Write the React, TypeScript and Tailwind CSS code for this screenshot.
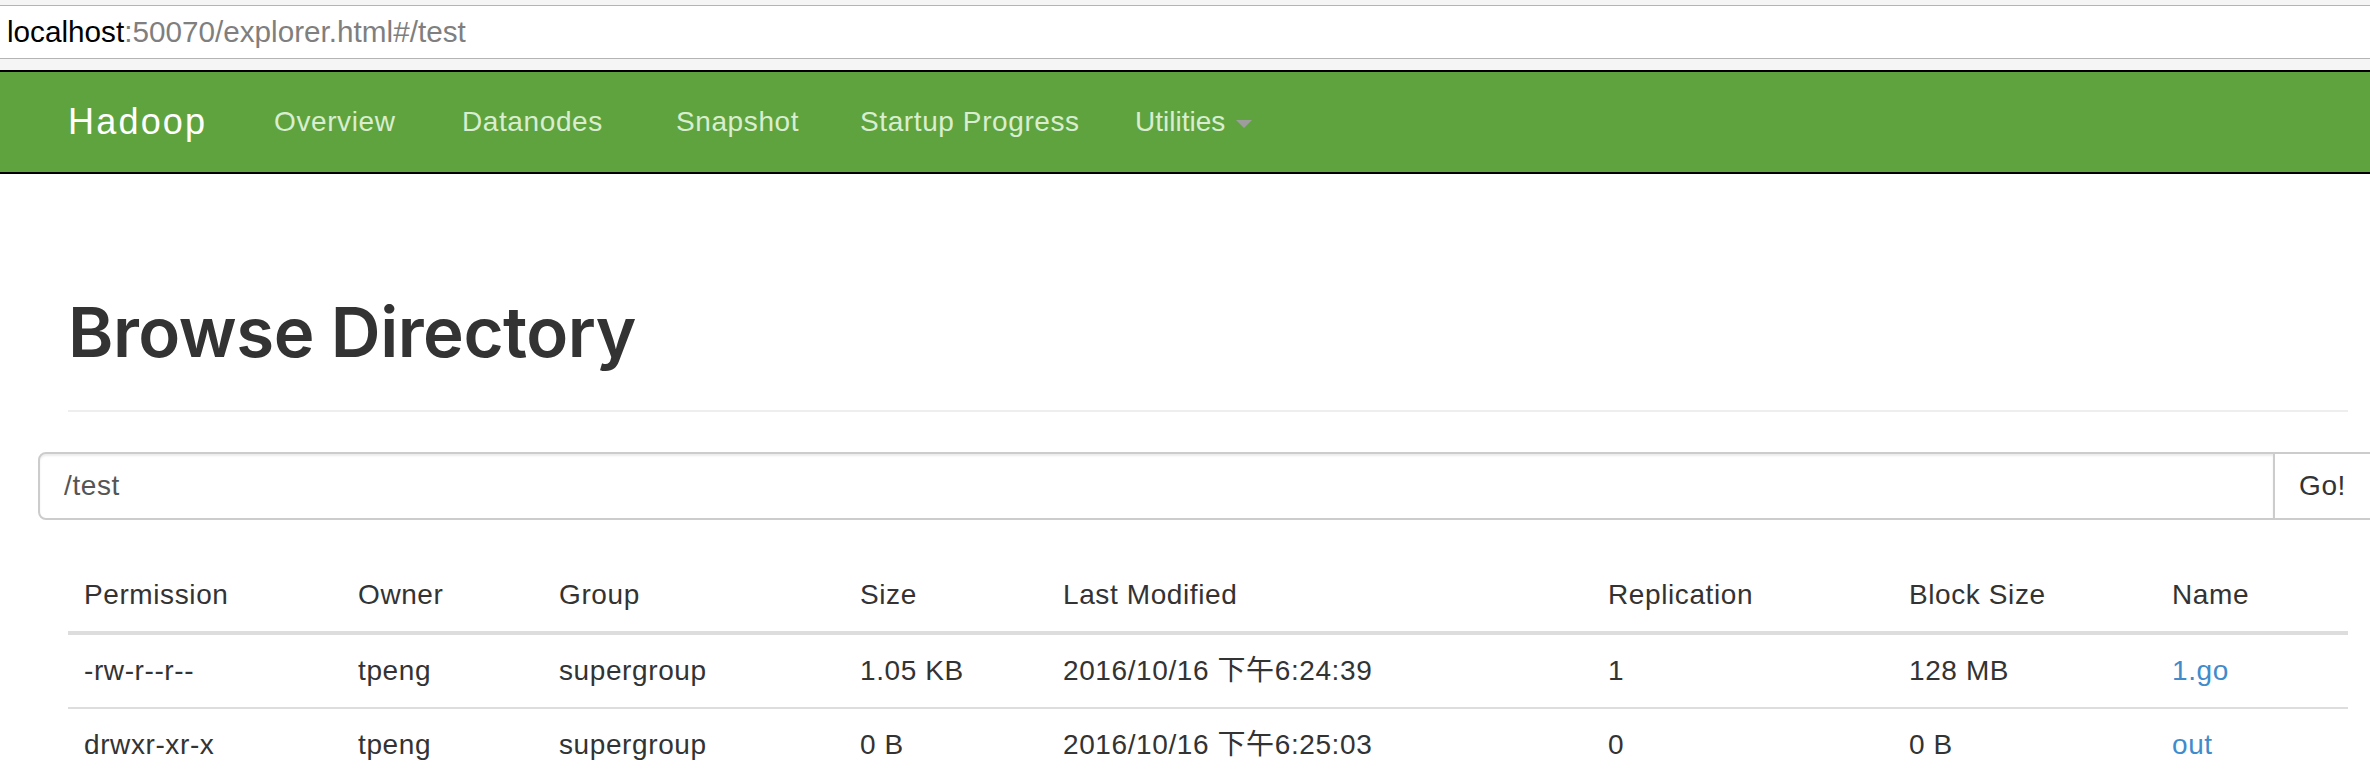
import React from "react";

const rows = [
  {
    perm: "-rw-r--r--",
    owner: "tpeng",
    group: "supergroup",
    size: "1.05 KB",
    modified: "2016/10/16 下午6:24:39",
    repl: "1",
    block: "128 MB",
    name: "1.go",
  },
  {
    perm: "drwxr-xr-x",
    owner: "tpeng",
    group: "supergroup",
    size: "0 B",
    modified: "2016/10/16 下午6:25:03",
    repl: "0",
    block: "0 B",
    name: "out",
  },
];

const headers = [
  "Permission",
  "Owner",
  "Group",
  "Size",
  "Last Modified",
  "Replication",
  "Block Size",
  "Name",
];

export default function App() {
  return (
    <div className="w-[2370px] h-[774px] overflow-hidden bg-white font-['Liberation_Sans','Noto_Sans_CJK_SC',sans-serif]">
      {/* Browser address bar */}
      <div className="bg-[#f5f5f5] pt-[5px] pb-[11px]">
        <div className="h-[54px] border-y border-[#b4b4b4] bg-white pl-[7px] pt-[9px] text-[29.7px] leading-[34px] whitespace-nowrap">
          <span className="text-black">localhost</span>
          <span className="text-[#7f7f7f]">:50070/explorer.html#/test</span>
        </div>
      </div>

      {/* Navbar */}
      <nav className="h-[104px] border-y-2 border-black bg-[#5fa33e]">
        <div className="flex pl-[68px] text-[28px] leading-[40px] tracking-[0.6px] whitespace-nowrap">
          <div className="w-[176px] py-[30px] text-[36px] text-white tracking-[2.2px]">Hadoop</div>
          <div className="w-[188px] py-[30px] pl-[30px] text-[#d9eed0]">Overview</div>
          <div className="w-[214px] py-[30px] pl-[30px] text-[#d9eed0]">Datanodes</div>
          <div className="w-[184px] py-[30px] pl-[30px] text-[#d9eed0]">Snapshot</div>
          <div className="w-[275px] py-[30px] pl-[30px] text-[#d9eed0]">Startup Progress</div>
          <div className="flex items-center py-[30px] pl-[30px] text-[#d9eed0]">
            <span className="tracking-normal">Utilities</span>
            <span className="ml-[11px] mt-[4px] h-0 w-0 border-x-[8px] border-t-[8px] border-x-transparent border-t-[#9d9d9d]" />
          </div>
        </div>
      </nav>

      {/* Main container */}
      <div className="ml-[38px] w-[2340px] px-[30px]">
        <div className="mt-[119px] mb-[40px] pb-[18px] border-b-2 border-[#eeeeee]">
          <h1 className="mb-[20px] font-['Inter','Liberation_Sans',sans-serif] text-[69px] leading-[79px] font-semibold tracking-[-0.5px] text-[#333333]">
            Browse Directory
          </h1>
        </div>

        <div className="-mx-[30px] flex h-[68px]">
          <input
            readOnly
            value="/test"
            className="min-w-0 flex-1 h-[68px] rounded-l-[8px] border-2 border-[#cccccc] bg-white px-[24px] text-[28px] tracking-[0.6px] text-[#555555] shadow-[inset_0_2px_2px_rgba(0,0,0,0.075)] outline-none font-['Liberation_Sans',sans-serif]"
          />
          <button className="-ml-[2px] h-[68px] w-[105px] shrink-0 rounded-r-[8px] border-2 border-[#cccccc] bg-white pl-[24px] text-left text-[28px] tracking-[0.6px] text-[#333333] font-['Liberation_Sans',sans-serif]">
            Go!
          </button>
        </div>

        <table className="mt-[39px] w-[2280px] table-fixed border-collapse text-[28px] leading-[40px] tracking-[0.6px] text-[#333333]">
          <colgroup>
            <col className="w-[274px]" />
            <col className="w-[201px]" />
            <col className="w-[301px]" />
            <col className="w-[203px]" />
            <col className="w-[545px]" />
            <col className="w-[301px]" />
            <col className="w-[263px]" />
            <col className="w-[192px]" />
          </colgroup>
          <thead>
            <tr>
              {headers.map((h) => (
                <th
                  key={h}
                  className="border-b-4 border-[#dddddd] p-[16px] text-left font-normal whitespace-nowrap"
                >
                  {h}
                </th>
              ))}
            </tr>
          </thead>
          <tbody>
            {rows.map((r) => (
              <tr key={r.name}>
                <td className="border-t-2 border-[#dddddd] p-[16px] whitespace-nowrap">{r.perm}</td>
                <td className="border-t-2 border-[#dddddd] p-[16px] whitespace-nowrap">{r.owner}</td>
                <td className="border-t-2 border-[#dddddd] p-[16px] whitespace-nowrap">{r.group}</td>
                <td className="border-t-2 border-[#dddddd] p-[16px] whitespace-nowrap">{r.size}</td>
                <td className="border-t-2 border-[#dddddd] p-[16px] whitespace-nowrap">{r.modified}</td>
                <td className="border-t-2 border-[#dddddd] p-[16px] whitespace-nowrap">{r.repl}</td>
                <td className="border-t-2 border-[#dddddd] p-[16px] whitespace-nowrap">{r.block}</td>
                <td className="border-t-2 border-[#dddddd] p-[16px] whitespace-nowrap">
                  <a className="text-[#428bca]">{r.name}</a>
                </td>
              </tr>
            ))}
          </tbody>
        </table>
      </div>
    </div>
  );
}
